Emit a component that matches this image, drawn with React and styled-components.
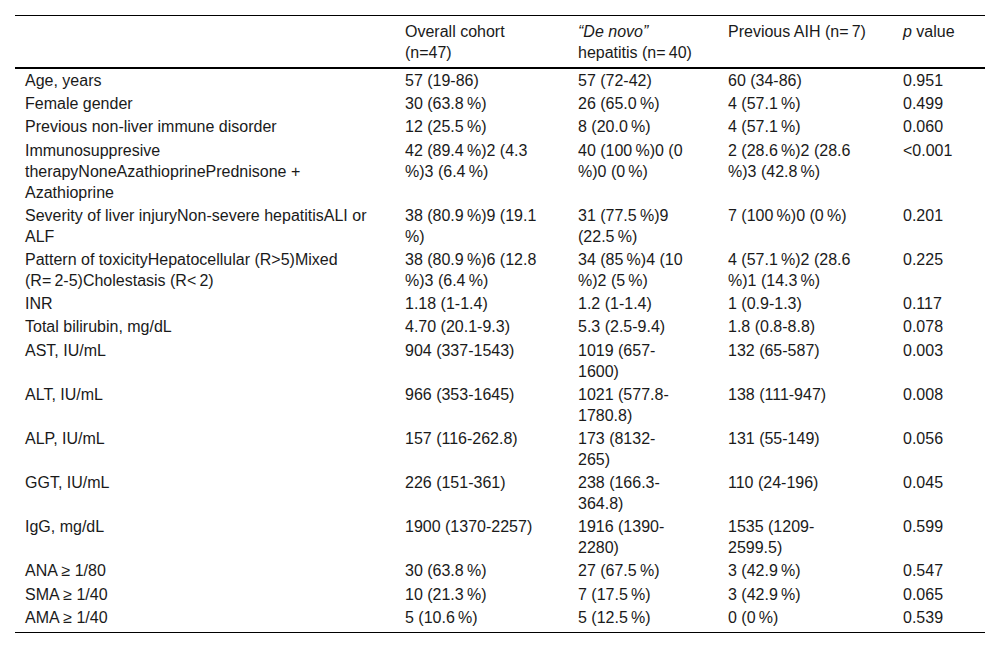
import React from "react";
import styled, { createGlobalStyle } from "styled-components";

const GlobalStyle = createGlobalStyle`
  html, body {
    margin: 0;
    padding: 0;
    background: #ffffff;
  }
  body {
    font-family: "Liberation Sans", Arial, Helvetica, sans-serif;
    color: #1a1a1a;
  }
`;

const Page = styled.div`
  width: 1000px;
  height: 648px;
  box-sizing: border-box;
  padding: 15px 15px 0 15px;
  background: #fff;
`;

const Table = styled.table`
  width: 970px;
  border-collapse: collapse;
  table-layout: fixed;
  border-top: 1px solid #000;
  border-bottom: 1px solid #000;
  font-size: 16px;
  line-height: 21px;
`;

const Col = styled.col`
  width: ${(p) => p.$w}px;
`;

const HeadRow = styled.tr`
  border-bottom: 2px solid #000;
`;

const HeadCell = styled.th`
  text-align: left;
  font-weight: normal;
  vertical-align: top;
  padding: 5px 10px 4px 10px;
  white-space: nowrap;
`;

const BodyRow = styled.tr`
  &:last-child td {
    padding-bottom: 4px;
  }
`;

const Cell = styled.td`
  vertical-align: top;
  padding: 1px 10px 1.2px 10px;
  white-space: nowrap;
`;

const Em = styled.i`
  font-style: italic;
`;

const T = "\u2009";

const rows = [
  [["Age, years"], ["57 (19-86)"], ["57 (72-42)"], ["60 (34-86)"], ["0.951"]],
  [["Female gender"], [`30 (63.8${T}%)`], [`26 (65.0${T}%)`], [`4 (57.1${T}%)`], ["0.499"]],
  [["Previous non-liver immune disorder"], [`12 (25.5${T}%)`], [`8 (20.0${T}%)`], [`4 (57.1${T}%)`], ["0.060"]],
  [
    ["Immunosuppresive", "therapyNoneAzathioprinePrednisone +", "Azathioprine"],
    [`42 (89.4${T}%)2 (4.3`, `%)3 (6.4${T}%)`],
    [`40 (100${T}%)0 (0`, `%)0 (0${T}%)`],
    [`2 (28.6${T}%)2 (28.6`, `%)3 (42.8${T}%)`],
    ["<0.001"],
  ],
  [
    ["Severity of liver injuryNon-severe hepatitisALI or", "ALF"],
    [`38 (80.9${T}%)9 (19.1`, "%)"],
    [`31 (77.5${T}%)9`, `(22.5${T}%)`],
    [`7 (100${T}%)0 (0${T}%)`],
    ["0.201"],
  ],
  [
    ["Pattern of toxicityHepatocellular (R>5)Mixed", `(R=${T}2-5)Cholestasis (R<${T}2)`],
    [`38 (80.9${T}%)6 (12.8`, `%)3 (6.4${T}%)`],
    [`34 (85${T}%)4 (10`, `%)2 (5${T}%)`],
    [`4 (57.1${T}%)2 (28.6`, `%)1 (14.3${T}%)`],
    ["0.225"],
  ],
  [["INR"], ["1.18 (1-1.4)"], ["1.2 (1-1.4)"], ["1 (0.9-1.3)"], ["0.117"]],
  [["Total bilirubin, mg/dL"], ["4.70 (20.1-9.3)"], ["5.3 (2.5-9.4)"], ["1.8 (0.8-8.8)"], ["0.078"]],
  [["AST, IU/mL"], ["904 (337-1543)"], ["1019 (657-", "1600)"], ["132 (65-587)"], ["0.003"]],
  [["ALT, IU/mL"], ["966 (353-1645)"], ["1021 (577.8-", "1780.8)"], ["138 (111-947)"], ["0.008"]],
  [["ALP, IU/mL"], ["157 (116-262.8)"], ["173 (8132-", "265)"], ["131 (55-149)"], ["0.056"]],
  [["GGT, IU/mL"], ["226 (151-361)"], ["238 (166.3-", "364.8)"], ["110 (24-196)"], ["0.045"]],
  [["IgG, mg/dL"], ["1900 (1370-2257)"], ["1916 (1390-", "2280)"], ["1535 (1209-", "2599.5)"], ["0.599"]],
  [["ANA \u2265 1/80"], [`30 (63.8${T}%)`], [`27 (67.5${T}%)`], [`3 (42.9${T}%)`], ["0.547"]],
  [["SMA \u2265 1/40"], [`10 (21.3${T}%)`], [`7 (17.5${T}%)`], [`3 (42.9${T}%)`], ["0.065"]],
  [["AMA \u2265 1/40"], [`5 (10.6${T}%)`], [`5 (12.5${T}%)`], [`0 (0${T}%)`], ["0.539"]],
];

const widths = [380, 173, 150, 175, 92];

function Lines({ lines }) {
  return lines.map((l, i) => (
    <React.Fragment key={i}>
      {i > 0 && <br />}
      {l}
    </React.Fragment>
  ));
}

export default function App() {
  return (
    <>
      <GlobalStyle />
      <Page>
        <Table>
          <colgroup>
            {widths.map((w, i) => (
              <Col key={i} $w={w} />
            ))}
          </colgroup>
          <thead>
            <HeadRow>
              <HeadCell />
              <HeadCell>
                Overall cohort
                <br />
                (n=47)
              </HeadCell>
              <HeadCell>
                <Em>“De novo”</Em>
                <br />
                hepatitis (n={T}40)
              </HeadCell>
              <HeadCell>Previous AIH (n={T}7)</HeadCell>
              <HeadCell>
                <Em>p</Em> value
              </HeadCell>
            </HeadRow>
          </thead>
          <tbody>
            {rows.map((r, i) => (
              <BodyRow key={i}>
                {r.map((c, j) => (
                  <Cell key={j}>
                    <Lines lines={c} />
                  </Cell>
                ))}
              </BodyRow>
            ))}
          </tbody>
        </Table>
      </Page>
    </>
  );
}
